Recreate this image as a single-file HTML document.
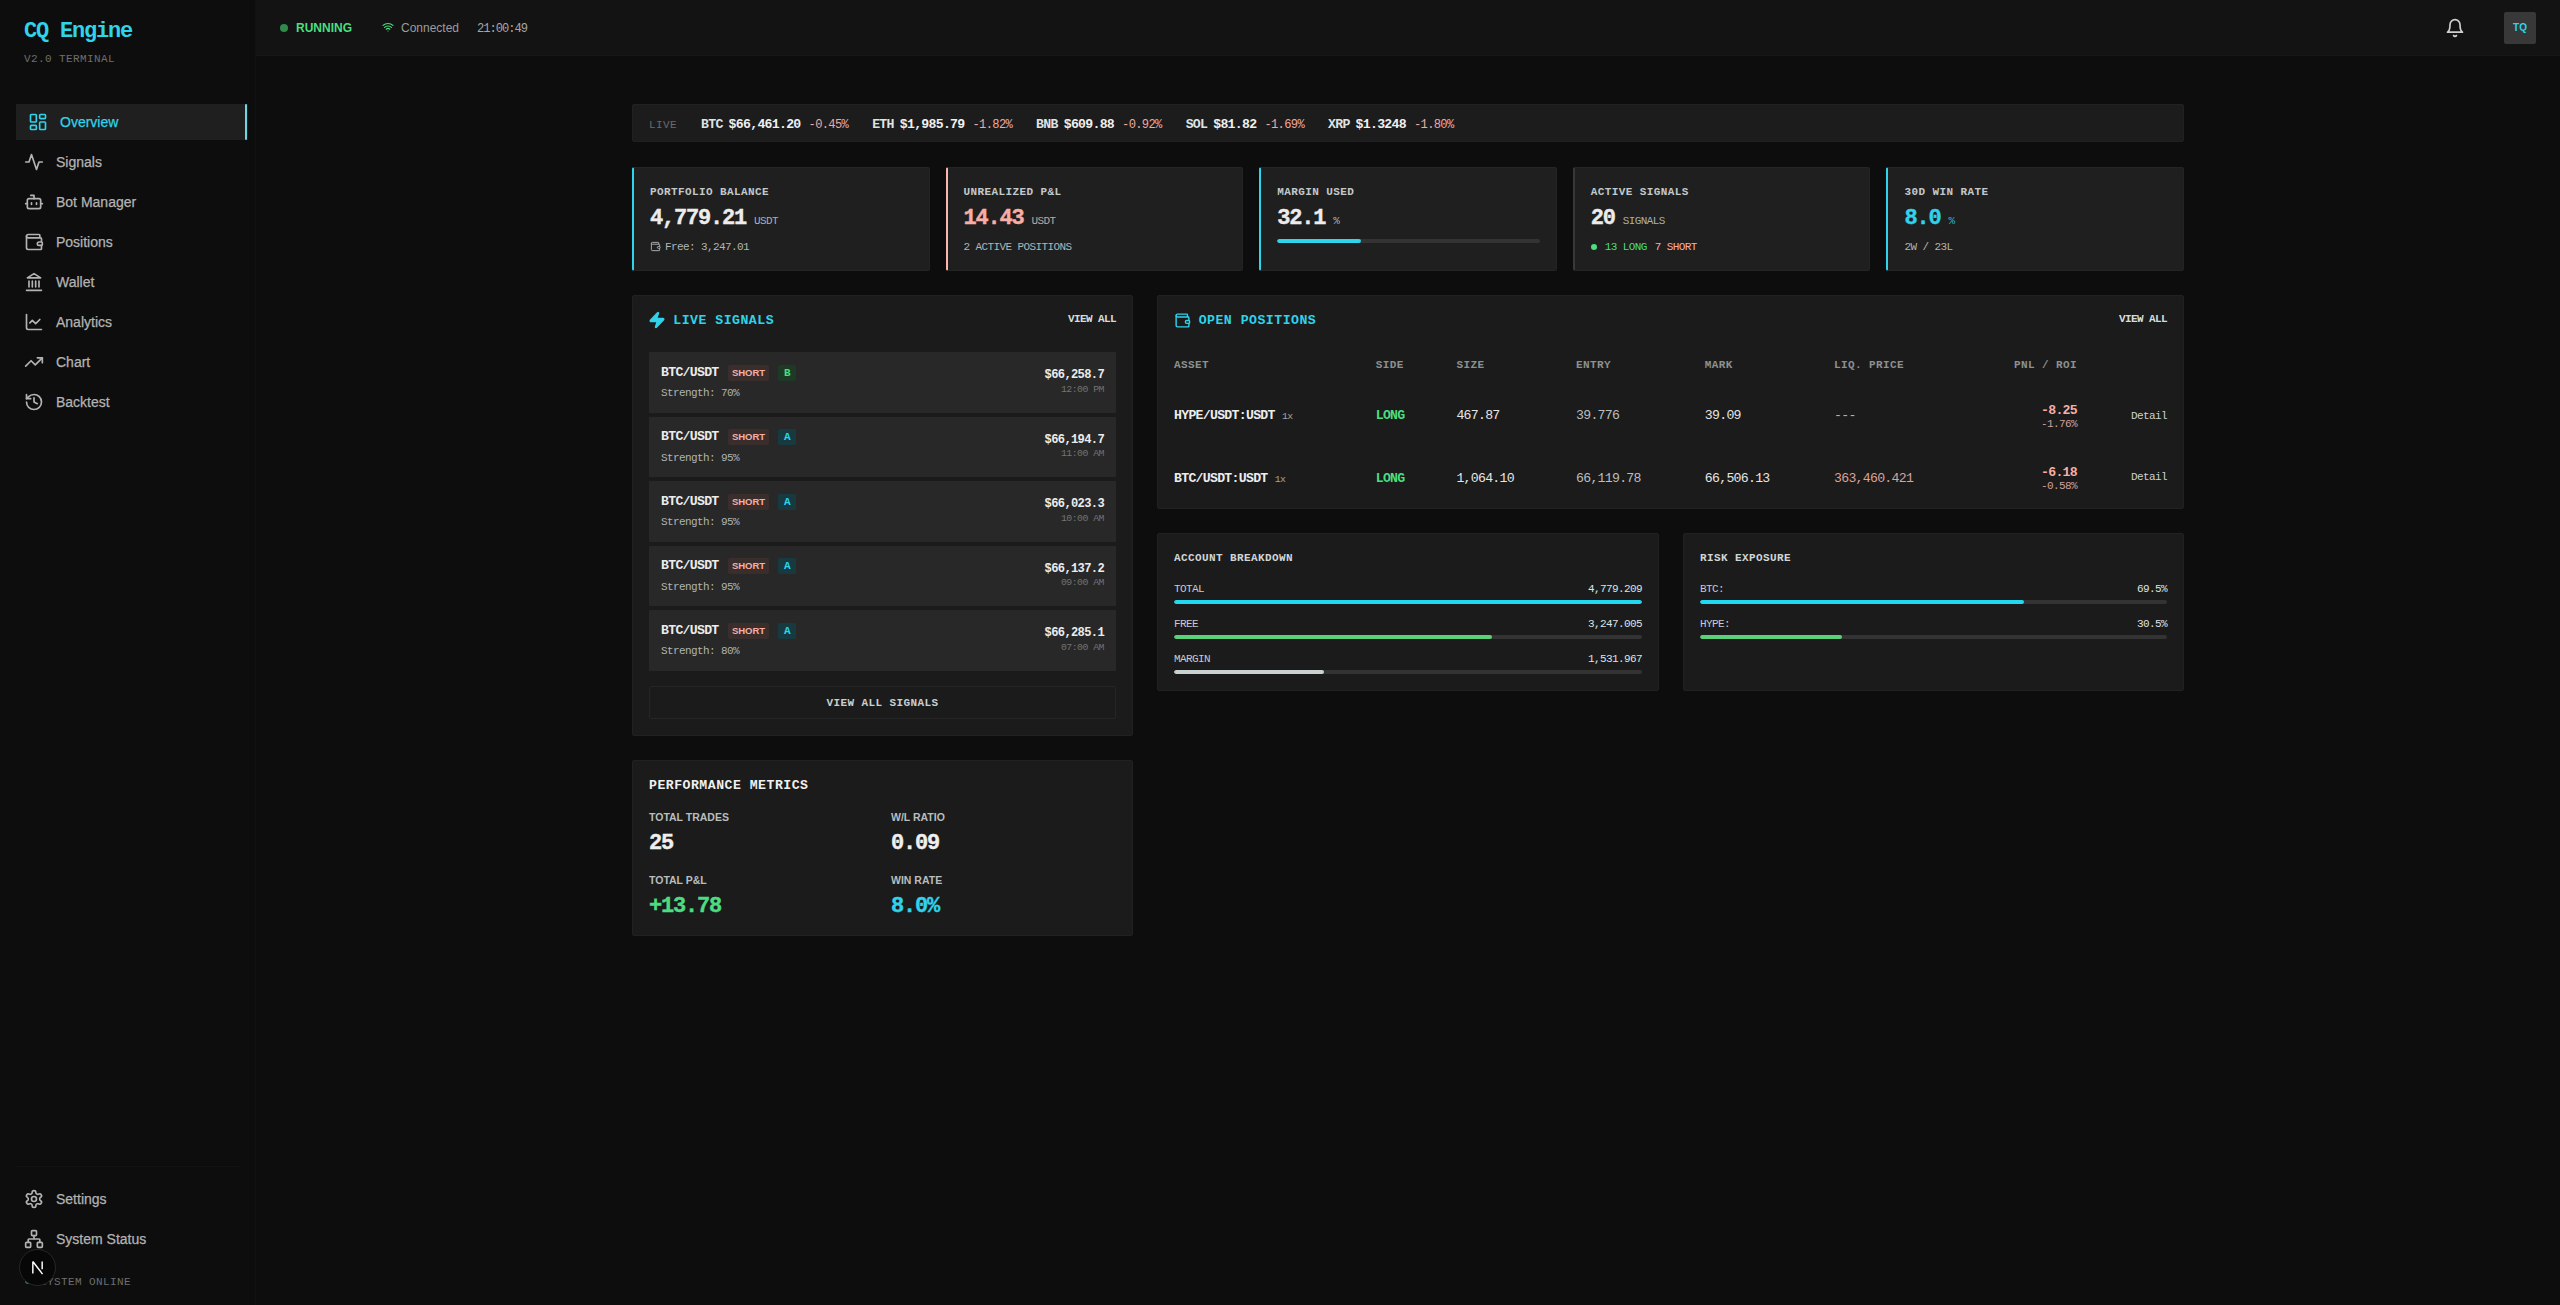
<!DOCTYPE html>
<html><head><meta charset="utf-8">
<style>
*{box-sizing:border-box;margin:0;padding:0}
html,body{width:2560px;height:1305px;overflow:hidden;background:#0d0d0d;font-family:"Liberation Sans",sans-serif;color:#e5e5e5}
.m{font-family:"Liberation Mono",monospace}
.a{position:absolute;white-space:nowrap}
#sb{position:absolute;left:0;top:0;width:256px;height:1305px;background:#0d0d0d;border-right:1px solid #111}
#hd{position:absolute;left:256px;top:0;width:2304px;height:56px;background:#131313;border-bottom:1px solid #171717}
.nav{position:absolute;left:16px;width:232px;height:36px;font-size:14px;color:#b3b3b3;-webkit-text-stroke:0.25px currentColor}
.nav svg{position:absolute;left:8px;top:8px;width:20px;height:20px;fill:none;stroke:#b3b3b3;stroke-width:2;stroke-linecap:round;stroke-linejoin:round}
.nav span{position:absolute;left:40px;top:8.5px;line-height:18px}
.nav.act{background:#1f1f1f;color:#2fd3ea}
.nav.act svg{stroke:#2fd3ea;left:12px}
.nav.act span{left:44px}
.nav.act::after{content:"";position:absolute;right:1px;top:0;width:2px;height:36px;border-radius:1px;background:#72d6e2}
.panel{position:absolute;background:#1b1b1b;border:1px solid #212121;border-radius:2px}
.card{position:absolute;top:167px;height:104px;width:297.6px;background:#1f1f1f;border:1px solid #242424;border-left:2px solid #383838;border-radius:2px}
.card .l{position:absolute;left:16px;top:17.8px;font-size:11.0px;line-height:12px;font-weight:bold;letter-spacing:0.4px;color:#c3c9ca}
.card .v{position:absolute;left:16px;top:38px;font-size:22px;letter-spacing:-1.2px;line-height:26px;font-weight:bold;color:#ececec;-webkit-text-stroke:0.4px currentColor}
.card .v small{font-size:11.0px;font-weight:normal;color:#a9b0b2;margin-left:8px;letter-spacing:-0.6px;-webkit-text-stroke:0}
.card .s{position:absolute;left:16px;top:72.6px;height:12px;display:flex;align-items:center;font-size:11.0px;letter-spacing:-0.6px;line-height:12px;color:#b0b6b8}
.ph{position:absolute;font-size:13.2px;line-height:14px;font-weight:bold;letter-spacing:0.48px;color:#2fd3ea}
.va{position:absolute;font-size:11.0px;line-height:12px;font-weight:bold;letter-spacing:-0.6px;color:#d6dcdc}
.sig{position:absolute;left:16px;width:467px;height:60.5px;background:#282828;border-radius:1px}
.sig .p{position:absolute;left:12px;top:13.5px;font-size:13.2px;letter-spacing:-0.72px;line-height:14px;font-weight:bold;color:#ececec}
.sig .bd{position:absolute;left:79px;top:12.3px;width:41px;height:16px;background:#3a2e2c;color:#f7aea6;font-family:'Liberation Sans',sans-serif;font-size:9.5px;font-weight:bold;line-height:16px;text-align:center;border-radius:2px}
.sig .g{position:absolute;left:129px;top:12.3px;width:18px;height:16px;font-size:11.0px;letter-spacing:-0.6px;font-weight:bold;line-height:16px;text-align:center;border-radius:2px}
.g.A{background:#173a40;color:#2fd3ea}
.g.B{background:#1d3a24;color:#4ade80}
.sig .st{position:absolute;left:12px;top:34.8px;font-size:11.0px;letter-spacing:-0.6px;line-height:12px;color:#aeb4b4}
.sig .pr{position:absolute;right:12px;top:17.1px;font-size:12.1px;letter-spacing:-0.66px;line-height:13px;font-weight:bold;color:#ececec}
.sig .t{position:absolute;right:12px;top:31.2px;font-size:9.9px;letter-spacing:-0.54px;line-height:11px;color:#6e7476}
.th{position:absolute;font-size:11.0px;line-height:12px;font-weight:bold;letter-spacing:0.4px;color:#8b9090}
.td{position:absolute;font-size:13.2px;letter-spacing:-0.72px;line-height:14px}
.bar{position:absolute;height:4px;background:#333;border-radius:2px;overflow:hidden}
.bar i{position:absolute;left:0;top:0;bottom:0;display:block;border-radius:2px}
</style></head><body>
<div id="sb">
  <div class="a m" style="left:24px;top:19.9px;font-size:22px;letter-spacing:-1.2px;line-height:24px;font-weight:bold;color:#2fd3ea">CQ Engine</div>
  <div class="a m" style="left:24px;top:52.8px;font-size:11.0px;line-height:12px;letter-spacing:0.4px;color:#6e6e6e">V2.0 TERMINAL</div>
  <div class="nav act" style="top:104px"><svg viewBox="0 0 24 24"><rect x="3" y="3" width="7" height="9" rx="1"/><rect x="14" y="3" width="7" height="5" rx="1"/><rect x="14" y="12" width="7" height="9" rx="1"/><rect x="3" y="16" width="7" height="5" rx="1"/></svg><span>Overview</span></div>
  <div class="nav" style="top:144px"><svg viewBox="0 0 24 24"><path d="M22 12h-4l-3 9L9 3l-3 9H2"/></svg><span>Signals</span></div>
  <div class="nav" style="top:184px"><svg viewBox="0 0 24 24"><path d="M12 8V4H8"/><rect x="4" y="8" width="16" height="12" rx="2"/><path d="M2 14h2M20 14h2M15 13v2M9 13v2"/></svg><span>Bot Manager</span></div>
  <div class="nav" style="top:224px"><svg viewBox="0 0 24 24"><path d="M19 7V4a1 1 0 0 0-1-1H5a2 2 0 0 0 0 4h15a1 1 0 0 1 1 1v4h-3a2 2 0 0 0 0 4h3a1 1 0 0 0 1-1v-2a1 1 0 0 0-1-1"/><path d="M3 5v14a2 2 0 0 0 2 2h15a1 1 0 0 0 1-1v-4"/></svg><span>Positions</span></div>
  <div class="nav" style="top:264px"><svg viewBox="0 0 24 24"><path d="M3 22h18M6 18v-7M10 18v-7M14 18v-7M18 18v-7"/><polygon points="12 2 20 7 4 7"/></svg><span>Wallet</span></div>
  <div class="nav" style="top:304px"><svg viewBox="0 0 24 24"><path d="M3 3v16a2 2 0 0 0 2 2h16"/><path d="m19 9-5 5-4-4-3 3"/></svg><span>Analytics</span></div>
  <div class="nav" style="top:344px"><svg viewBox="0 0 24 24"><polyline points="22 7 13.5 15.5 8.5 10.5 2 17"/><polyline points="16 7 22 7 22 13"/></svg><span>Chart</span></div>
  <div class="nav" style="top:384px"><svg viewBox="0 0 24 24"><path d="M3 12a9 9 0 1 0 9-9 9.75 9.75 0 0 0-6.74 2.74L3 8"/><path d="M3 3v5h5"/><path d="M12 7v5l4 2"/></svg><span>Backtest</span></div>
  <div class="a" style="left:16px;top:1166px;width:224px;height:1px;background:#131313"></div>
  <div class="nav" style="top:1181px"><svg viewBox="0 0 24 24"><path d="M12.22 2h-.44a2 2 0 0 0-2 2v.18a2 2 0 0 1-1 1.73l-.43.25a2 2 0 0 1-2 0l-.15-.08a2 2 0 0 0-2.73.73l-.22.38a2 2 0 0 0 .73 2.73l.15.1a2 2 0 0 1 1 1.72v.51a2 2 0 0 1-1 1.74l-.15.09a2 2 0 0 0-.73 2.730l.22.38a2 2 0 0 0 2.73.73l.15-.08a2 2 0 0 1 2 0l.43.25a2 2 0 0 1 1 1.73V20a2 2 0 0 0 2 2h.44a2 2 0 0 0 2-2v-.18a2 2 0 0 1 1-1.73l.43-.25a2 2 0 0 1 2 0l.15.08a2 2 0 0 0 2.73-.73l.22-.39a2 2 0 0 0-.73-2.73l-.15-.08a2 2 0 0 1-1-1.74v-.5a2 2 0 0 1 1-1.74l.15-.09a2 2 0 0 0 .73-2.73l-.22-.38a2 2 0 0 0-2.73-.73l-.15.08a2 2 0 0 1-2 0l-.43-.25a2 2 0 0 1-1-1.73V4a2 2 0 0 0-2-2z"/><circle cx="12" cy="12" r="3"/></svg><span>Settings</span></div>
  <div class="nav" style="top:1221px"><svg viewBox="0 0 24 24"><rect x="16" y="16" width="6" height="6" rx="1"/><rect x="2" y="16" width="6" height="6" rx="1"/><rect x="9" y="2" width="6" height="6" rx="1"/><path d="M5 16v-3a1 1 0 0 1 1-1h12a1 1 0 0 1 1 1v3M12 12V8"/></svg><span>System Status</span></div>
  <div class="a" style="left:25px;top:1278px;width:6px;height:6px;border-radius:3px;background:#2f7d45"></div>
  <div class="a m" style="left:40px;top:1276px;font-size:11.0px;line-height:12px;letter-spacing:0.4px;color:#6e6e6e">SYSTEM ONLINE</div>
  <div class="a" style="left:19px;top:1249px;width:37px;height:37px;border-radius:50%;background:#070707;border:1px solid #262626"><svg viewBox="0 0 36 36" style="position:absolute;left:0;top:0;width:35px;height:35px"><path d="M13.2 11.8v12.4M13.2 11.8l10 13M22.8 11.8v8" stroke="#fff" stroke-width="1.5" fill="none"/></svg></div>
</div>
<div id="hd">
  <div class="a" style="left:24px;top:24px;width:8px;height:8px;border-radius:4px;background:#2f8a4c"></div>
  <div class="a" style="left:40px;top:21px;font-size:12px;line-height:14px;font-weight:bold;color:#4ade80">RUNNING</div>
  <svg class="a" viewBox="0 0 24 24" style="left:126px;top:21px;width:12px;height:12px;fill:none;stroke:#4ade80;stroke-width:2.4;stroke-linecap:round"><path d="M12 20h.01M2 8.82a15 15 0 0 1 20 0M5 12.86a10 10 0 0 1 14 0M8.5 16.43a5 5 0 0 1 7 0"/></svg>
  <div class="a" style="left:145px;top:21px;font-size:12px;line-height:14px;color:#9c9c9c">Connected</div>
  <div class="a m" style="left:221px;top:22.5px;font-size:12.1px;letter-spacing:-1.0px;line-height:13px;color:#a6a6a6">21:00:49</div>
  <svg class="a" viewBox="0 0 24 24" style="left:2189px;top:18px;width:20px;height:20px;fill:none;stroke:#d0d0d0;stroke-width:2;stroke-linecap:round;stroke-linejoin:round"><path d="M6 8a6 6 0 0 1 12 0c0 7 3 9 3 9H3s3-2 3-9"/><path d="M10.3 21a1.94 1.94 0 0 0 3.4 0"/></svg>
  <div class="a" style="left:2248px;top:12px;width:32px;height:32px;background:#383838;border-radius:2px;font-size:10px;font-weight:bold;line-height:32px;text-align:center;color:#2fd3ea">TQ</div>
</div>
<div class="panel m" style="left:632px;top:104px;width:1552px;height:38px;background:#1c1c1c">
  <div class="a" style="left:16px;top:12.9px;line-height:14px;display:flex;align-items:baseline">
    <span style="font-size:11.0px;letter-spacing:0.4px;color:#6b6b6b;margin-right:24px">LIVE</span>
    <b style="font-size:13.2px;letter-spacing:-0.72px;color:#dfe3e3">BTC</b><b style="font-size:13.2px;letter-spacing:-0.72px;color:#f0f0f0;margin-left:6px">$66,461.20</b><span style="font-size:12.1px;letter-spacing:-0.66px;color:#eea9a1;margin-left:8px">-0.45%</span>
    <b style="font-size:13.2px;letter-spacing:-0.72px;color:#dfe3e3;margin-left:24px">ETH</b><b style="font-size:13.2px;letter-spacing:-0.72px;color:#f0f0f0;margin-left:6px">$1,985.79</b><span style="font-size:12.1px;letter-spacing:-0.66px;color:#eea9a1;margin-left:8px">-1.82%</span>
    <b style="font-size:13.2px;letter-spacing:-0.72px;color:#dfe3e3;margin-left:24px">BNB</b><b style="font-size:13.2px;letter-spacing:-0.72px;color:#f0f0f0;margin-left:6px">$609.88</b><span style="font-size:12.1px;letter-spacing:-0.66px;color:#eea9a1;margin-left:8px">-0.92%</span>
    <b style="font-size:13.2px;letter-spacing:-0.72px;color:#dfe3e3;margin-left:24px">SOL</b><b style="font-size:13.2px;letter-spacing:-0.72px;color:#f0f0f0;margin-left:6px">$81.82</b><span style="font-size:12.1px;letter-spacing:-0.66px;color:#eea9a1;margin-left:8px">-1.69%</span>
    <b style="font-size:13.2px;letter-spacing:-0.72px;color:#dfe3e3;margin-left:24px">XRP</b><b style="font-size:13.2px;letter-spacing:-0.72px;color:#f0f0f0;margin-left:6px">$1.3248</b><span style="font-size:12.1px;letter-spacing:-0.66px;color:#eea9a1;margin-left:8px">-1.80%</span>
  </div>
</div>
<div class="card m" style="left:632px;border-left-color:#2fd3ea">
  <div class="l">PORTFOLIO BALANCE</div>
  <div class="v">4,779.21<small>USDT</small></div>
  <div class="s"><svg viewBox="0 0 24 24" style="width:11px;height:11px;vertical-align:-2px;margin-right:4px;fill:none;stroke:#b0b6b8;stroke-width:2"><path d="M19 7V4a1 1 0 0 0-1-1H5a2 2 0 0 0 0 4h15a1 1 0 0 1 1 1v4h-3a2 2 0 0 0 0 4h3a1 1 0 0 0 1-1v-2a1 1 0 0 0-1-1"/><path d="M3 5v14a2 2 0 0 0 2 2h15a1 1 0 0 0 1-1v-4"/></svg>Free: 3,247.01</div>
</div>
<div class="card m" style="left:945.6px;border-left-color:#fcb6ae">
  <div class="l">UNREALIZED P&amp;L</div>
  <div class="v" style="color:#f7aea6">14.43<small style="color:#c9a29c">USDT</small></div>
  <div class="s">2 ACTIVE POSITIONS</div>
</div>
<div class="card m" style="left:1259.2px;border-left-color:#2fd3ea">
  <div class="l">MARGIN USED</div>
  <div class="v">32.1<small>%</small></div>
  <div class="bar" style="left:16px;top:71px;width:263px"><i style="width:84px;background:#2fd3ea"></i></div>
</div>
<div class="card m" style="left:1572.8px">
  <div class="l">ACTIVE SIGNALS</div>
  <div class="v">20<small>SIGNALS</small></div>
  <div class="s"><span style="display:inline-block;width:6px;height:6px;border-radius:3px;background:#4ade80;margin-right:8px;vertical-align:1px"></span><span style="color:#4ade80">13 LONG</span><span style="color:#f7aea6;margin-left:8px">7 SHORT</span></div>
</div>
<div class="card m" style="left:1886.4px;border-left-color:#2fd3ea">
  <div class="l">30D WIN RATE</div>
  <div class="v" style="color:#2fd3ea">8.0<small style="color:#2fb5c8">%</small></div>
  <div class="s">2W / 23L</div>
</div>
<div class="panel m" style="left:632px;top:295px;width:501px;height:441px">
  <svg class="a" viewBox="0 0 24 24" style="left:14.5px;top:15.3px;width:18px;height:18px;fill:#2fd3ea;stroke:#2fd3ea;stroke-width:2;stroke-linejoin:round"><path d="M4 14a1 1 0 0 1-.78-1.63l9.9-10.2a.5.5 0 0 1 .86.46l-1.92 6.02A1 1 0 0 0 13 10h7a1 1 0 0 1 .78 1.63l-9.9 10.2a.5.5 0 0 1-.86-.46l1.92-6.02A1 1 0 0 0 11 14z"/></svg>
  <div class="ph" style="left:40.3px;top:18.1px">LIVE SIGNALS</div>
  <div class="va" style="right:16px;top:16.8px">VIEW ALL</div>
  <div class="sig" style="top:56.4px"><div class="p m">BTC/USDT</div><div class="bd">SHORT</div><div class="g m B">B</div><div class="st m">Strength: 70%</div><div class="pr m">$66,258.7</div><div class="t m">12:00 PM</div></div>
  <div class="sig" style="top:120.9px"><div class="p m">BTC/USDT</div><div class="bd">SHORT</div><div class="g m A">A</div><div class="st m">Strength: 95%</div><div class="pr m">$66,194.7</div><div class="t m">11:00 AM</div></div>
  <div class="sig" style="top:185.4px"><div class="p m">BTC/USDT</div><div class="bd">SHORT</div><div class="g m A">A</div><div class="st m">Strength: 95%</div><div class="pr m">$66,023.3</div><div class="t m">10:00 AM</div></div>
  <div class="sig" style="top:249.9px"><div class="p m">BTC/USDT</div><div class="bd">SHORT</div><div class="g m A">A</div><div class="st m">Strength: 95%</div><div class="pr m">$66,137.2</div><div class="t m">09:00 AM</div></div>
  <div class="sig" style="top:314.4px"><div class="p m">BTC/USDT</div><div class="bd">SHORT</div><div class="g m A">A</div><div class="st m">Strength: 80%</div><div class="pr m">$66,285.1</div><div class="t m">07:00 AM</div></div>
  <div class="a" style="left:16px;top:390px;width:467px;height:33px;padding-top:1px;border:1px solid #252525;border-radius:2px;text-align:center;font-size:11.0px;line-height:31px;font-weight:bold;letter-spacing:0.4px;color:#c9cfcf">VIEW ALL SIGNALS</div>
</div>
<div class="panel m" style="left:632px;top:760px;width:501px;height:176px">
  <div class="a" style="left:16px;top:18.3px;font-size:13.2px;line-height:14px;font-weight:bold;letter-spacing:0.48px;color:#f0f0f0">PERFORMANCE METRICS</div>
  <div class="a" style="left:16px;top:49.6px;font-family:'Liberation Sans',sans-serif;font-size:10.5px;line-height:12px;font-weight:bold;color:#b9bdbd">TOTAL TRADES</div>
  <div class="a m" style="left:16px;top:71.2px;font-size:22px;letter-spacing:-1.2px;line-height:24px;font-weight:bold;color:#efefef;-webkit-text-stroke:0.4px currentColor">25</div>
  <div class="a" style="left:258px;top:49.6px;font-family:'Liberation Sans',sans-serif;font-size:10.5px;line-height:12px;font-weight:bold;color:#b9bdbd">W/L RATIO</div>
  <div class="a m" style="left:258px;top:71.2px;font-size:22px;letter-spacing:-1.2px;line-height:24px;font-weight:bold;color:#efefef;-webkit-text-stroke:0.4px currentColor">0.09</div>
  <div class="a" style="left:16px;top:112.5px;font-family:'Liberation Sans',sans-serif;font-size:10.5px;line-height:12px;font-weight:bold;color:#b9bdbd">TOTAL P&amp;L</div>
  <div class="a m" style="left:16px;top:134.2px;font-size:22px;letter-spacing:-1.2px;line-height:24px;font-weight:bold;color:#4ade80;-webkit-text-stroke:0.4px currentColor">+13.78</div>
  <div class="a" style="left:258px;top:112.5px;font-family:'Liberation Sans',sans-serif;font-size:10.5px;line-height:12px;font-weight:bold;color:#b9bdbd">WIN RATE</div>
  <div class="a m" style="left:258px;top:134.2px;font-size:22px;letter-spacing:-1.2px;line-height:24px;font-weight:bold;color:#2fd3ea;-webkit-text-stroke:0.4px currentColor">8.0%</div>
</div>
<div class="panel m" style="left:1157px;top:295px;width:1027px;height:214px">
  <svg class="a" viewBox="0 0 24 24" style="left:16px;top:16px;width:17px;height:17px;fill:none;stroke:#2fd3ea;stroke-width:2;stroke-linecap:round;stroke-linejoin:round"><path d="M19 7V4a1 1 0 0 0-1-1H5a2 2 0 0 0 0 4h15a1 1 0 0 1 1 1v4h-3a2 2 0 0 0 0 4h3a1 1 0 0 0 1-1v-2a1 1 0 0 0-1-1"/><path d="M3 5v14a2 2 0 0 0 2 2h15a1 1 0 0 0 1-1v-4"/></svg>
  <div class="ph" style="left:40.7px;top:18.4px">OPEN POSITIONS</div>
  <div class="va" style="right:16px;top:16.8px">VIEW ALL</div>
  <div class="th" style="left:16px;top:62.8px">ASSET</div>
  <div class="th" style="left:217.7px;top:62.8px">SIDE</div>
  <div class="th" style="left:298.4px;top:62.8px">SIZE</div>
  <div class="th" style="left:418px;top:62.8px">ENTRY</div>
  <div class="th" style="left:546.8px;top:62.8px">MARK</div>
  <div class="th" style="left:676px;top:62.8px">LIQ. PRICE</div>
  <div class="th" style="right:106px;top:62.8px">PNL / ROI</div>
  <div class="td" style="left:16px;top:113.4px;font-weight:bold;color:#ededed">HYPE/USDT:USDT <span style="font-size:9.9px;letter-spacing:-0.54px;font-weight:normal;color:#9ea4a4">1x</span></div>
  <div class="td" style="left:217.7px;top:113.4px;font-weight:bold;color:#4ade80">LONG</div>
  <div class="td" style="left:298.4px;top:113.4px;color:#e6e6e6">467.87</div>
  <div class="td" style="left:418px;top:113.4px;color:#b9bfbf">39.776</div>
  <div class="td" style="left:546.8px;top:113.4px;color:#e6e6e6">39.09</div>
  <div class="td" style="left:676px;top:113.4px;color:#dba19a">---</div>
  <div class="td" style="right:106px;top:107.5px;font-weight:bold;color:#f7aea6;text-align:right">-8.25</div>
  <div class="td" style="right:106px;top:121.5px;font-size:11.0px;letter-spacing:-0.6px;line-height:12px;color:#cfa19b;text-align:right">-1.76%</div>
  <div class="td" style="right:16px;top:113.5px;font-size:11.0px;letter-spacing:-0.6px;line-height:12px;color:#cdd2d2">Detail</div>
  <div class="td" style="left:16px;top:175.5px;font-weight:bold;color:#ededed">BTC/USDT:USDT <span style="font-size:9.9px;letter-spacing:-0.54px;font-weight:normal;color:#9ea4a4">1x</span></div>
  <div class="td" style="left:217.7px;top:175.5px;font-weight:bold;color:#4ade80">LONG</div>
  <div class="td" style="left:298.4px;top:175.5px;color:#e6e6e6">1,064.10</div>
  <div class="td" style="left:418px;top:175.5px;color:#b9bfbf">66,119.78</div>
  <div class="td" style="left:546.8px;top:175.5px;color:#e6e6e6">66,506.13</div>
  <div class="td" style="left:676px;top:175.5px;color:#dba19a">363,460.421</div>
  <div class="td" style="right:106px;top:169.5px;font-weight:bold;color:#f7aea6;text-align:right">-6.18</div>
  <div class="td" style="right:106px;top:183.7px;font-size:11.0px;letter-spacing:-0.6px;line-height:12px;color:#cfa19b;text-align:right">-0.58%</div>
  <div class="td" style="right:16px;top:175px;font-size:11.0px;letter-spacing:-0.6px;line-height:12px;color:#cdd2d2">Detail</div>
</div>
<div class="panel m" style="left:1157px;top:533px;width:502px;height:158px">
  <div class="a" style="left:16px;top:17.7px;font-size:11.0px;line-height:12px;font-weight:bold;letter-spacing:0.4px;color:#d0d6d8">ACCOUNT BREAKDOWN</div>
  <div class="a" style="left:16px;top:48.7px;font-size:11.0px;letter-spacing:-0.6px;line-height:12px;color:#c5cbce">TOTAL</div>
  <div class="a" style="right:16px;top:48.7px;font-size:11.0px;letter-spacing:-0.6px;line-height:12px;color:#dfe3e3">4,779.209</div>
  <div class="bar" style="left:16px;top:65.8px;width:468px"><i style="width:468px;background:#22d8f0"></i></div>
  <div class="a" style="left:16px;top:84.1px;font-size:11.0px;letter-spacing:-0.6px;line-height:12px;color:#c5cbce">FREE</div>
  <div class="a" style="right:16px;top:84.1px;font-size:11.0px;letter-spacing:-0.6px;line-height:12px;color:#dfe3e3">3,247.005</div>
  <div class="bar" style="left:16px;top:101px;width:468px"><i style="width:318px;background:#5bd07a"></i></div>
  <div class="a" style="left:16px;top:118.7px;font-size:11.0px;letter-spacing:-0.6px;line-height:12px;color:#c5cbce">MARGIN</div>
  <div class="a" style="right:16px;top:118.7px;font-size:11.0px;letter-spacing:-0.6px;line-height:12px;color:#dfe3e3">1,531.967</div>
  <div class="bar" style="left:16px;top:135.8px;width:468px"><i style="width:150px;background:#c9d2d2"></i></div>
</div>
<div class="panel m" style="left:1683px;top:533px;width:501px;height:158px">
  <div class="a" style="left:16px;top:17.7px;font-size:11.0px;line-height:12px;font-weight:bold;letter-spacing:0.4px;color:#d0d6d8">RISK EXPOSURE</div>
  <div class="a" style="left:16px;top:48.7px;font-size:11.0px;letter-spacing:-0.6px;line-height:12px;color:#c5cbce">BTC:</div>
  <div class="a" style="right:16px;top:48.7px;font-size:11.0px;letter-spacing:-0.6px;line-height:12px;color:#dfe3e3">69.5%</div>
  <div class="bar" style="left:16px;top:65.8px;width:467px"><i style="width:324px;background:#22d8f0"></i></div>
  <div class="a" style="left:16px;top:84.1px;font-size:11.0px;letter-spacing:-0.6px;line-height:12px;color:#c5cbce">HYPE:</div>
  <div class="a" style="right:16px;top:84.1px;font-size:11.0px;letter-spacing:-0.6px;line-height:12px;color:#dfe3e3">30.5%</div>
  <div class="bar" style="left:16px;top:101px;width:467px"><i style="width:142px;background:#5bd07a"></i></div>
</div>

</body></html>
